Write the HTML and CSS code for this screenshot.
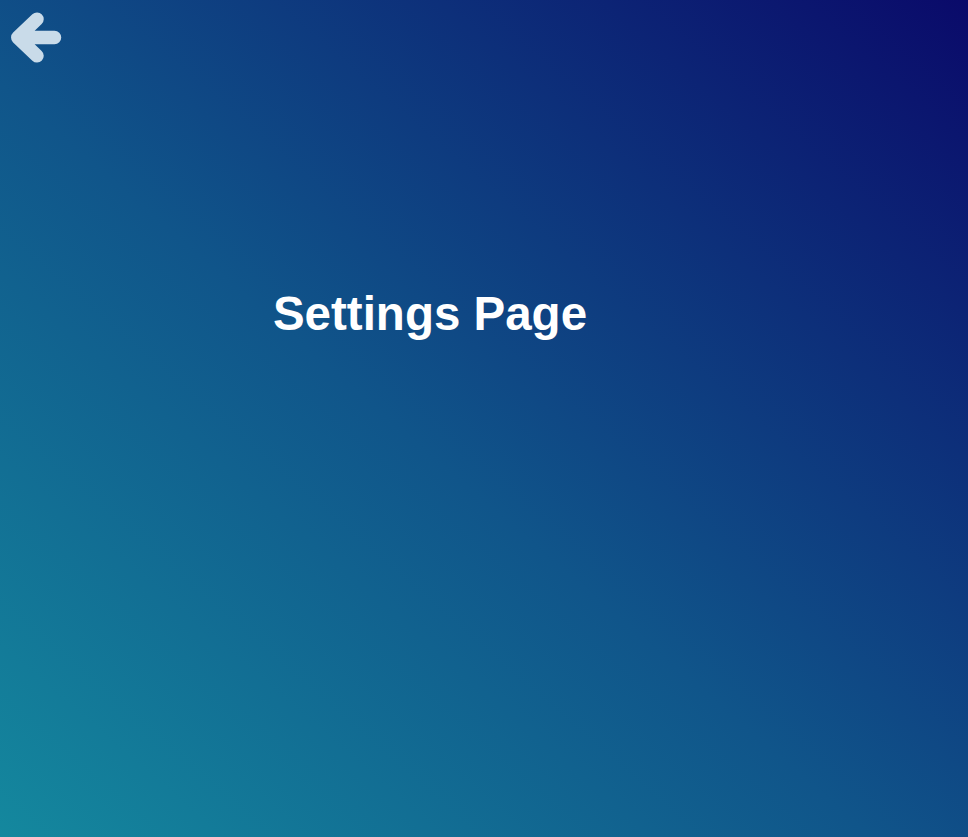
FILE: index.html
```html
<!DOCTYPE html>
<html lang="en">
<head>
<meta charset="utf-8">
<title>Settings</title>
<link rel="stylesheet" href="styles.css">
</head>
<body>
<div class="page">
  <header class="topbar">
    <a class="back" href="#" aria-label="Back">
      <svg class="back-icon" viewBox="0 0 54 54" width="54" height="54" aria-hidden="true">
        <path d="M27 9.2 L7.8 27.5 L27 45.8 M7.8 27.5 H44.5" fill="none" stroke="currentColor" stroke-width="13.5" stroke-linecap="round" stroke-linejoin="round"/>
      </svg>
    </a>
  </header>
  <main class="content">
    <h1 class="title">Settings Page</h1>
  </main>
</div>
</body>
</html>
```
FILE: styles.css
```css
html, body {
  margin: 0;
  padding: 0;
  height: 100%;
}
body {
  font-family: "Liberation Sans", Arial, sans-serif;
  background: linear-gradient(to top right, #14889e 0%, #10558a 45%, #0a0a6a 100%);
  background-attachment: fixed;
  color: #ffffff;
}
.page {
  min-height: 100vh;
  display: flex;
  flex-direction: column;
}
.topbar {
  padding: 10px;
  display: flex;
}
.back {
  color: #c9dbe9;
  display: block;
  line-height: 0;
}
.back-icon {
  display: block;
}
.content {
  max-width: 860px;
  width: 100%;
  padding-top: 212px;
}
.title {
  margin: 0;
  font-size: 47.5px;
  font-weight: 700;
  text-align: center;
}
```
